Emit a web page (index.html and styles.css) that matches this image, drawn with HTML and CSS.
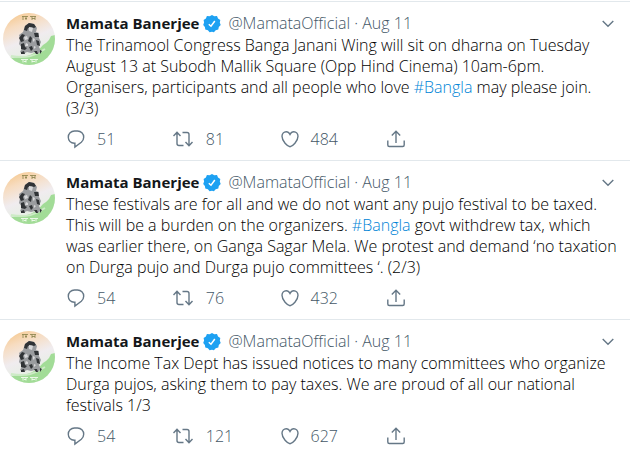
FILE: index.html
```html
<!DOCTYPE html>
<html lang="en">
<head>
    <meta charset="UTF-8">
    <meta name="viewport" content="width=device-width, initial-scale=1.0">
    <title>Mamata Banerjee (@MamataOfficial)</title>
    <link rel="stylesheet" href="styles.css">
</head>
<body>
    <svg class="sprite" aria-hidden="true">
        <defs>
            <linearGradient id="sky" x1="0" y1="0" x2="0.4" y2="1">
                <stop offset="0" stop-color="#f5c27e"/>
                <stop offset="0.3" stop-color="#f7dcc0"/>
                <stop offset="0.6" stop-color="#f0ecef"/>
                <stop offset="1" stop-color="#e2efdf"/>
            </linearGradient>
            <clipPath id="round"><circle cx="26" cy="26" r="26"/></clipPath>
        </defs>
        <symbol id="avatar" viewBox="0 0 52 52">
            <g clip-path="url(#round)">
                <rect width="52" height="52" fill="url(#sky)"/>
                <path d="M0 44c8 1 15 1 24-1 7-2 12-6 16-11l3-2 3-3 2-4 4-1v30H0z" fill="#a2dc97"/>
                <path d="M8 43c10 2 20 1 27-3l7-4" fill="none" stroke="#cdebc6" stroke-width="2"/>
                <!-- group of figures -->
                <path d="M22 13l4-3 5 1 3 4-1 4 3 1v5l2 4-2 5 2 4-3 3-3-2-4 1-4-1-4 2-3-2 2-4-3-4 1-5-1-4 4-3z" fill="#9a9c9f"/>
                <path d="M21 17l1-4 4-3 5 1 2 3-2 1-3-1-3 1-1 3zM16 25l3-4 3 1-2 3 1 3-3 1zM31 20l4 0 1 4-4 0zM18 31l3-1 1 4 2 1-2 2-4-1zM27 23l2 2-1 5-3-2zM33 27l3 1 1 5-3-1zM26 34l3-1 1 3-2 2zM18 39l3-1 1 3-4 0zM31 38l3 0 1 3-2 0zM37 37l2 1-2 3z" fill="#303336"/>
                <path d="M26 14l4 1-1 4-3-1zM21 24l3-1 1 3-3 1zM30 25l2 1-1 3-1-1zM23 30l2 1 0 2-3 0zM31 33l2 1-2 2z" fill="#d8d8da"/>
                <!-- lettering strokes -->
                <path d="M19 3.500h6M20 3.500v3.500M23 3.500v3.500M22 5.500h2M27 3.500h6M29 3.500v3.500M32 3.500v3.500M29 5.500h3" fill="none" stroke="#868048" stroke-width=".8"/>
                <path d="M18 46.500h7M20 46.500v3M23 46.500v3M21 48.500h2M27 46.500h8M29 46.500v3M33 46.500v3M29 48.500h3" fill="none" stroke="#f2fbef" stroke-width=".9"/>
            </g>
        </symbol>
        <symbol id="verified" viewBox="0 0 18 18">
            <path d="M9 0l2.3 1.3 2.7-.2 1 2.4 2.3 1.5-.5 2.6.9 2.5-1.9 1.8-.5 2.7-2.6.6-1.8 2L9 16.800l-2.400.4-1.700-2-2.600-.7-.4-2.600L.2 10l.9-2.400-.5-2.600 2.300-1.400 1-2.500 2.700.2z" fill="#1da1f2"/>
            <path d="M5.800 9.200l2.200 2 3.800-5.200" fill="none" stroke="#fff" stroke-width="1.500"/>
        </symbol>
        <symbol id="reply" viewBox="0 0 20 20">
            <path d="M8.500 2h3a6.200 6.200 0 0 1 6.200 6.300c0 2-1 3.700-2.400 5L8.900 18v-3.800H8.300c-3.500-.1-6-2.500-6-5.900A6.200 6.200 0 0 1 8.500 2z"/>
        </symbol>
        <symbol id="retweet" viewBox="0 0 22 20">
            <path d="M.5 7L4 3.300 7.500 7M4 3.500V14.500Q4 16.500 6 16.500H10.500M9.500 3.500H14Q16 3.500 16 5.500V16.500M12.500 13l3.500 3.700L19.500 13"/>
        </symbol>
        <symbol id="like" viewBox="0 0 20 20">
            <path d="M10 17.700C7.500 17.500 2 12.200 2 7.300 2 4.700 4 2.700 6.200 2.700 8 2.700 9.300 4 10 5.400c.7-1.400 2-2.700 3.800-2.700C16 2.700 18 4.700 18 7.300c0 4.900-5.500 10.200-8 10.400z"/>
        </symbol>
        <symbol id="share" viewBox="0 0 20 20">
            <path d="M5.800 6.500L10 2.300l4.200 4.200M10 2.500v11.500M1.800 11.500v4.500q0 1.500 1.500 1.500h13.400q1.500 0 1.500-1.500v-4.500"/>
        </symbol>
        <symbol id="caret" viewBox="0 0 12 8">
            <path d="M.7 1l5.300 5.300L11.300 1"/>
        </symbol>
    </svg>

    <main class="timeline">
        <article class="tweet">
            <a class="avatar" href="#" aria-label="Mamata Banerjee"><svg><use href="#avatar"/></svg></a>
            <div class="content">
                <header class="tweet-header">
                    <a class="name" href="#">Mamata Banerjee</a>
                    <svg class="verified"><use href="#verified"/></svg>
                    <span class="meta">@MamataOfficial · <a href="#">Aug 11</a></span>
                    <button class="more" aria-label="More"><svg><use href="#caret"/></svg></button>
                </header>
                <p class="text">The Trinamool Congress Banga Janani Wing will sit on dharna on Tuesday<br>
                    August 13 at Subodh Mallik Square (Opp Hind Cinema) 10am-6pm.<br>
                    Organisers, participants and all people who love <a href="#">#Bangla</a> may please join.<br>
                    (3/3)</p>
                <div class="actions">
                    <button aria-label="Reply, 51"><svg><use href="#reply"/></svg><span>51</span></button>
                    <button aria-label="Retweet, 81"><svg class="wide"><use href="#retweet"/></svg><span>81</span></button>
                    <button aria-label="Like, 484"><svg><use href="#like"/></svg><span>484</span></button>
                    <button aria-label="Share"><svg><use href="#share"/></svg></button>
                </div>
            </div>
        </article>

        <article class="tweet">
            <a class="avatar" href="#" aria-label="Mamata Banerjee"><svg><use href="#avatar"/></svg></a>
            <div class="content">
                <header class="tweet-header">
                    <a class="name" href="#">Mamata Banerjee</a>
                    <svg class="verified"><use href="#verified"/></svg>
                    <span class="meta">@MamataOfficial · <a href="#">Aug 11</a></span>
                    <button class="more" aria-label="More"><svg><use href="#caret"/></svg></button>
                </header>
                <p class="text">These festivals are for all and we do not want any pujo festival to be taxed.<br>
                    This will be a burden on the organizers. <a href="#">#Bangla</a> govt withdrew tax, which<br>
                    was earlier there, on Ganga Sagar Mela. We protest and demand ‘no taxation<br>
                    on Durga pujo and Durga pujo committees ‘. (2/3)</p>
                <div class="actions">
                    <button aria-label="Reply, 54"><svg><use href="#reply"/></svg><span>54</span></button>
                    <button aria-label="Retweet, 76"><svg class="wide"><use href="#retweet"/></svg><span>76</span></button>
                    <button aria-label="Like, 432"><svg><use href="#like"/></svg><span>432</span></button>
                    <button aria-label="Share"><svg><use href="#share"/></svg></button>
                </div>
            </div>
        </article>

        <article class="tweet">
            <a class="avatar" href="#" aria-label="Mamata Banerjee"><svg><use href="#avatar"/></svg></a>
            <div class="content">
                <header class="tweet-header">
                    <a class="name" href="#">Mamata Banerjee</a>
                    <svg class="verified"><use href="#verified"/></svg>
                    <span class="meta">@MamataOfficial · <a href="#">Aug 11</a></span>
                    <button class="more" aria-label="More"><svg><use href="#caret"/></svg></button>
                </header>
                <p class="text">The Income Tax Dept has issued notices to many committees who organize<br>
                    Durga pujos, asking them to pay taxes. We are proud of all our national<br>
                    festivals 1/3</p>
                <div class="actions">
                    <button aria-label="Reply, 54"><svg><use href="#reply"/></svg><span>54</span></button>
                    <button aria-label="Retweet, 121"><svg class="wide"><use href="#retweet"/></svg><span>121</span></button>
                    <button aria-label="Like, 627"><svg><use href="#like"/></svg><span>627</span></button>
                    <button aria-label="Share"><svg><use href="#share"/></svg></button>
                </div>
            </div>
        </article>
    </main>
</body>
</html>
```
FILE: styles.css
```css
* {
    margin: 0;
    padding: 0;
    box-sizing: border-box;
}

body {
    font-family: "Segoe UI", "Open Sans", sans-serif;
    font-size: 16px;
    font-weight: 300;
    line-height: 21px;
    color: #000;
    background: #fff;
}

a {
    color: inherit;
    text-decoration: none;
}

button {
    border: 0;
    background: none;
    font: inherit;
    color: inherit;
    cursor: pointer;
}

svg {
    display: block;
}

.sprite {
    position: absolute;
    width: 0;
    height: 0;
}

.timeline {
    padding-top: 1px;
}

.tweet {
    display: flex;
    gap: 11px;
    padding: 11px 16px 11px 3px;
    border-top: 1px solid #e2e8ec;
}

.avatar,
.avatar svg {
    flex: none;
    width: 52px;
    height: 52px;
}

.content {
    flex: 1;
    min-width: 0;
}

.tweet-header {
    display: flex;
    align-items: center;
    margin-bottom: 1px;
    white-space: nowrap;
}

.name {
    font-size: 15px;
    font-weight: 700;
    color: #14171a;
}

.verified {
    flex: none;
    width: 18px;
    height: 18px;
    margin: 0 7px 0 4px;
}

.meta {
    color: #445767;
}

.more {
    margin-left: auto;
    color: #657786;
}

.more svg {
    width: 12px;
    height: 8px;
}

.more svg,
.actions svg {
    fill: none;
    stroke: #657786;
    stroke-width: 1.4;
}

.text {
    white-space: nowrap;
}

.text a {
    color: #0084d6;
}

.actions {
    display: grid;
    grid-template-columns: repeat(4, 1fr);
    max-width: 427px;
    margin-top: 10px;
    color: #445767;
}

.actions button {
    display: flex;
    align-items: center;
    gap: 11px;
    height: 20px;
}

.actions svg {
    width: 20px;
    height: 20px;
}

.actions svg.wide {
    width: 22px;
}
```
